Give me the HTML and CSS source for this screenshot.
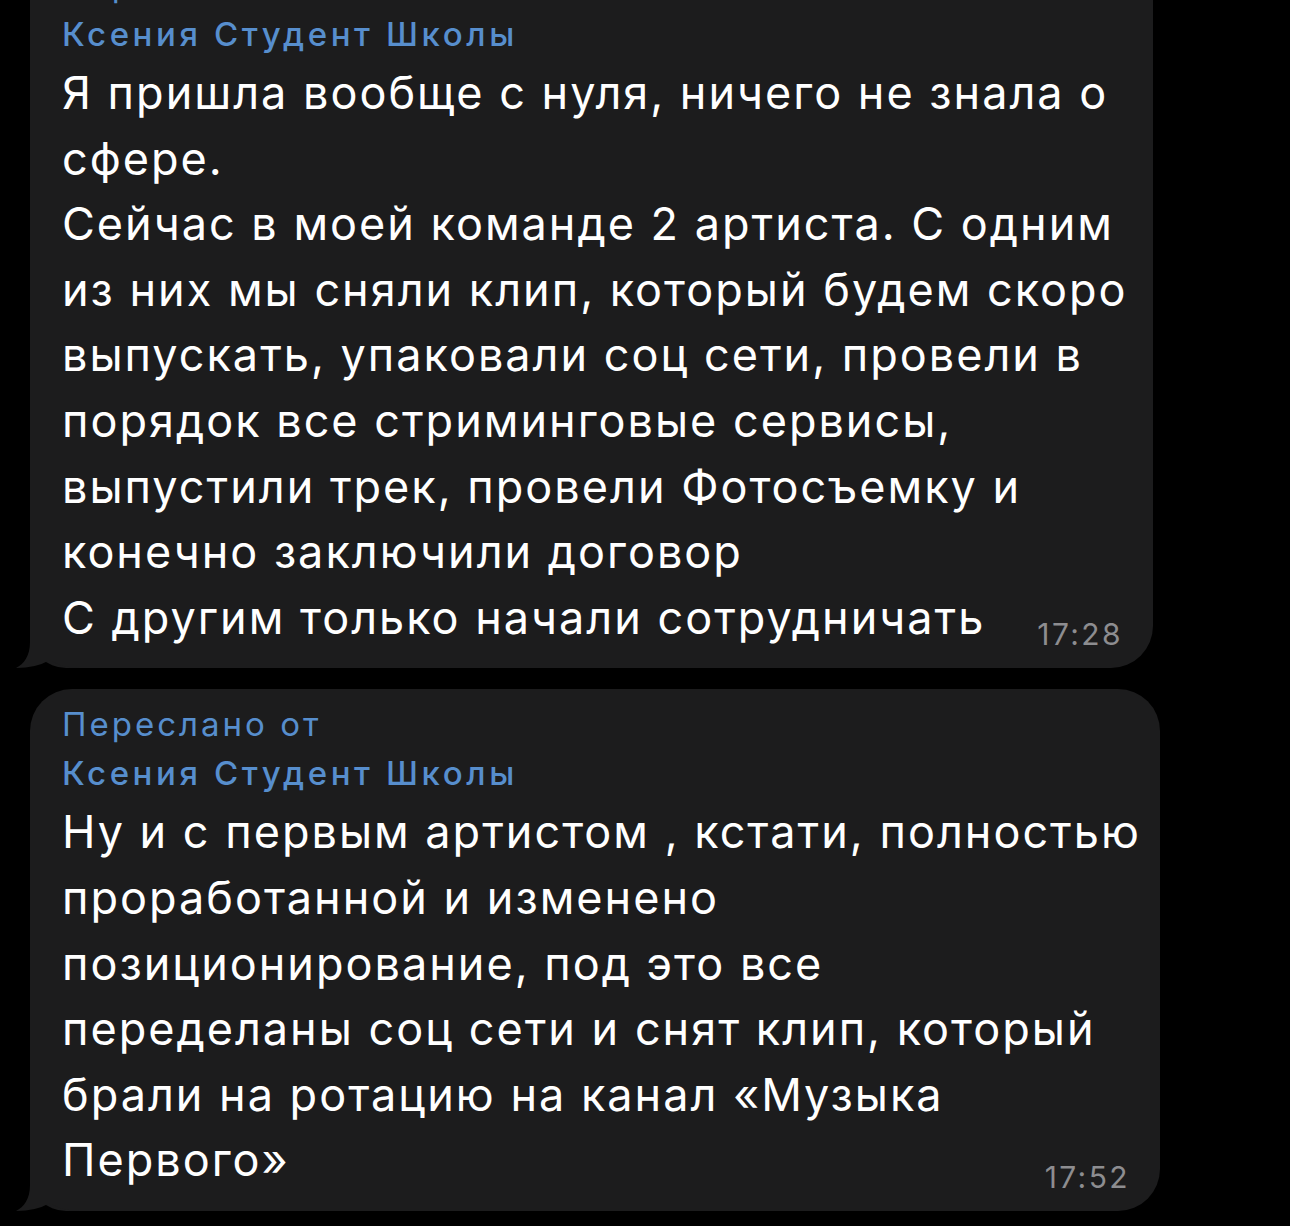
FILE: index.html
```html
<!DOCTYPE html>
<html lang="ru">
<head>
<meta charset="utf-8">
<title>Чат</title>
<link rel="stylesheet" href="styles.css">
</head>
<body>
<div class="chat">
  <div class="bubble b1">
    <svg class="tail" width="64" height="50" viewBox="0 0 64 50"><path d="M14 0 L14 24 C14 38 8 46 0 50 Q20 50 34 42 Q46 50 64 50 L64 0 Z" fill="#1c1c1d"/></svg>
    <div class="fwd">Переслано от</div>
    <div class="author">Ксения Студент Школы</div>
    <div class="text">
      <div class="line">Я пришла вообще с нуля, ничего не знала о</div>
      <div class="line">сфере.</div>
      <div class="line">Сейчас в моей команде 2 артиста. С одним</div>
      <div class="line">из них мы сняли клип, который будем скоро</div>
      <div class="line">выпускать, упаковали соц сети, провели в</div>
      <div class="line">порядок все стриминговые сервисы,</div>
      <div class="line">выпустили трек, провели Фотосъемку и</div>
      <div class="line">конечно заключили договор</div>
      <div class="line last"><span>С другим только начали сотрудничать</span><span class="time">17:28</span></div>
    </div>
  </div>
  <div class="bubble b2">
    <svg class="tail" width="64" height="50" viewBox="0 0 64 50"><path d="M14 0 L14 24 C14 38 8 46 0 50 Q20 50 34 42 Q46 50 64 50 L64 0 Z" fill="#1c1c1d"/></svg>
    <div class="fwd">Переслано от</div>
    <div class="author">Ксения Студент Школы</div>
    <div class="text">
      <div class="line">Ну и с первым артистом , кстати, полностью</div>
      <div class="line">проработанной и изменено</div>
      <div class="line">позиционирование, под это все</div>
      <div class="line">переделаны соц сети и снят клип, который</div>
      <div class="line">брали на ротацию на канал «Музыка</div>
      <div class="line last"><span>Первого»</span><span class="time">17:52</span></div>
    </div>
  </div>
</div>
</body>
</html>
```

FILE: styles.css
```css
html, body {
  margin: 0;
  padding: 0;
  background: #000;
  height: 100%;
  overflow: hidden;
}

body {
  font-family: Inter, "Noto Sans", "Liberation Sans", sans-serif;
  color: #fff;
}

.chat {
  margin-top: -50px;
  padding-left: 30px;
  display: flex;
  flex-direction: column;
  align-items: flex-start;
  gap: 21px;
}

.bubble {
  position: relative;
  background: #1c1c1d;
  border-radius: 42px 42px 42px 36px;
  padding: 12px 32px 18px 32px;
  box-sizing: border-box;
}

.b1 { width: 1123px; }
.b2 { width: 1130px; }

.fwd {
  position: relative;
  color: #578ecd;
  font-size: 33px;
  letter-spacing: 3px;
  line-height: 46px;
  white-space: nowrap;
}

.author {
  position: relative;
  color: #578ecd;
  font-size: 33px;
  font-weight: 500;
  letter-spacing: 3.6px;
  line-height: 52px;
  white-space: nowrap;
}

.text {
  position: relative;
  font-size: 45px;
  letter-spacing: 2px;
  line-height: 65.6px;
}

.line {
  white-space: nowrap;
}

.line.last {
  display: flex;
  justify-content: space-between;
  align-items: flex-end;
}

.time {
  color: #8d8d90;
  font-size: 30px;
  letter-spacing: 2.4px;
  margin-right: -2px;
  line-height: 1;
  margin-bottom: 1px;
}

.tail {
  position: absolute;
  left: -14px;
  bottom: 0;
  display: block;
}
```
